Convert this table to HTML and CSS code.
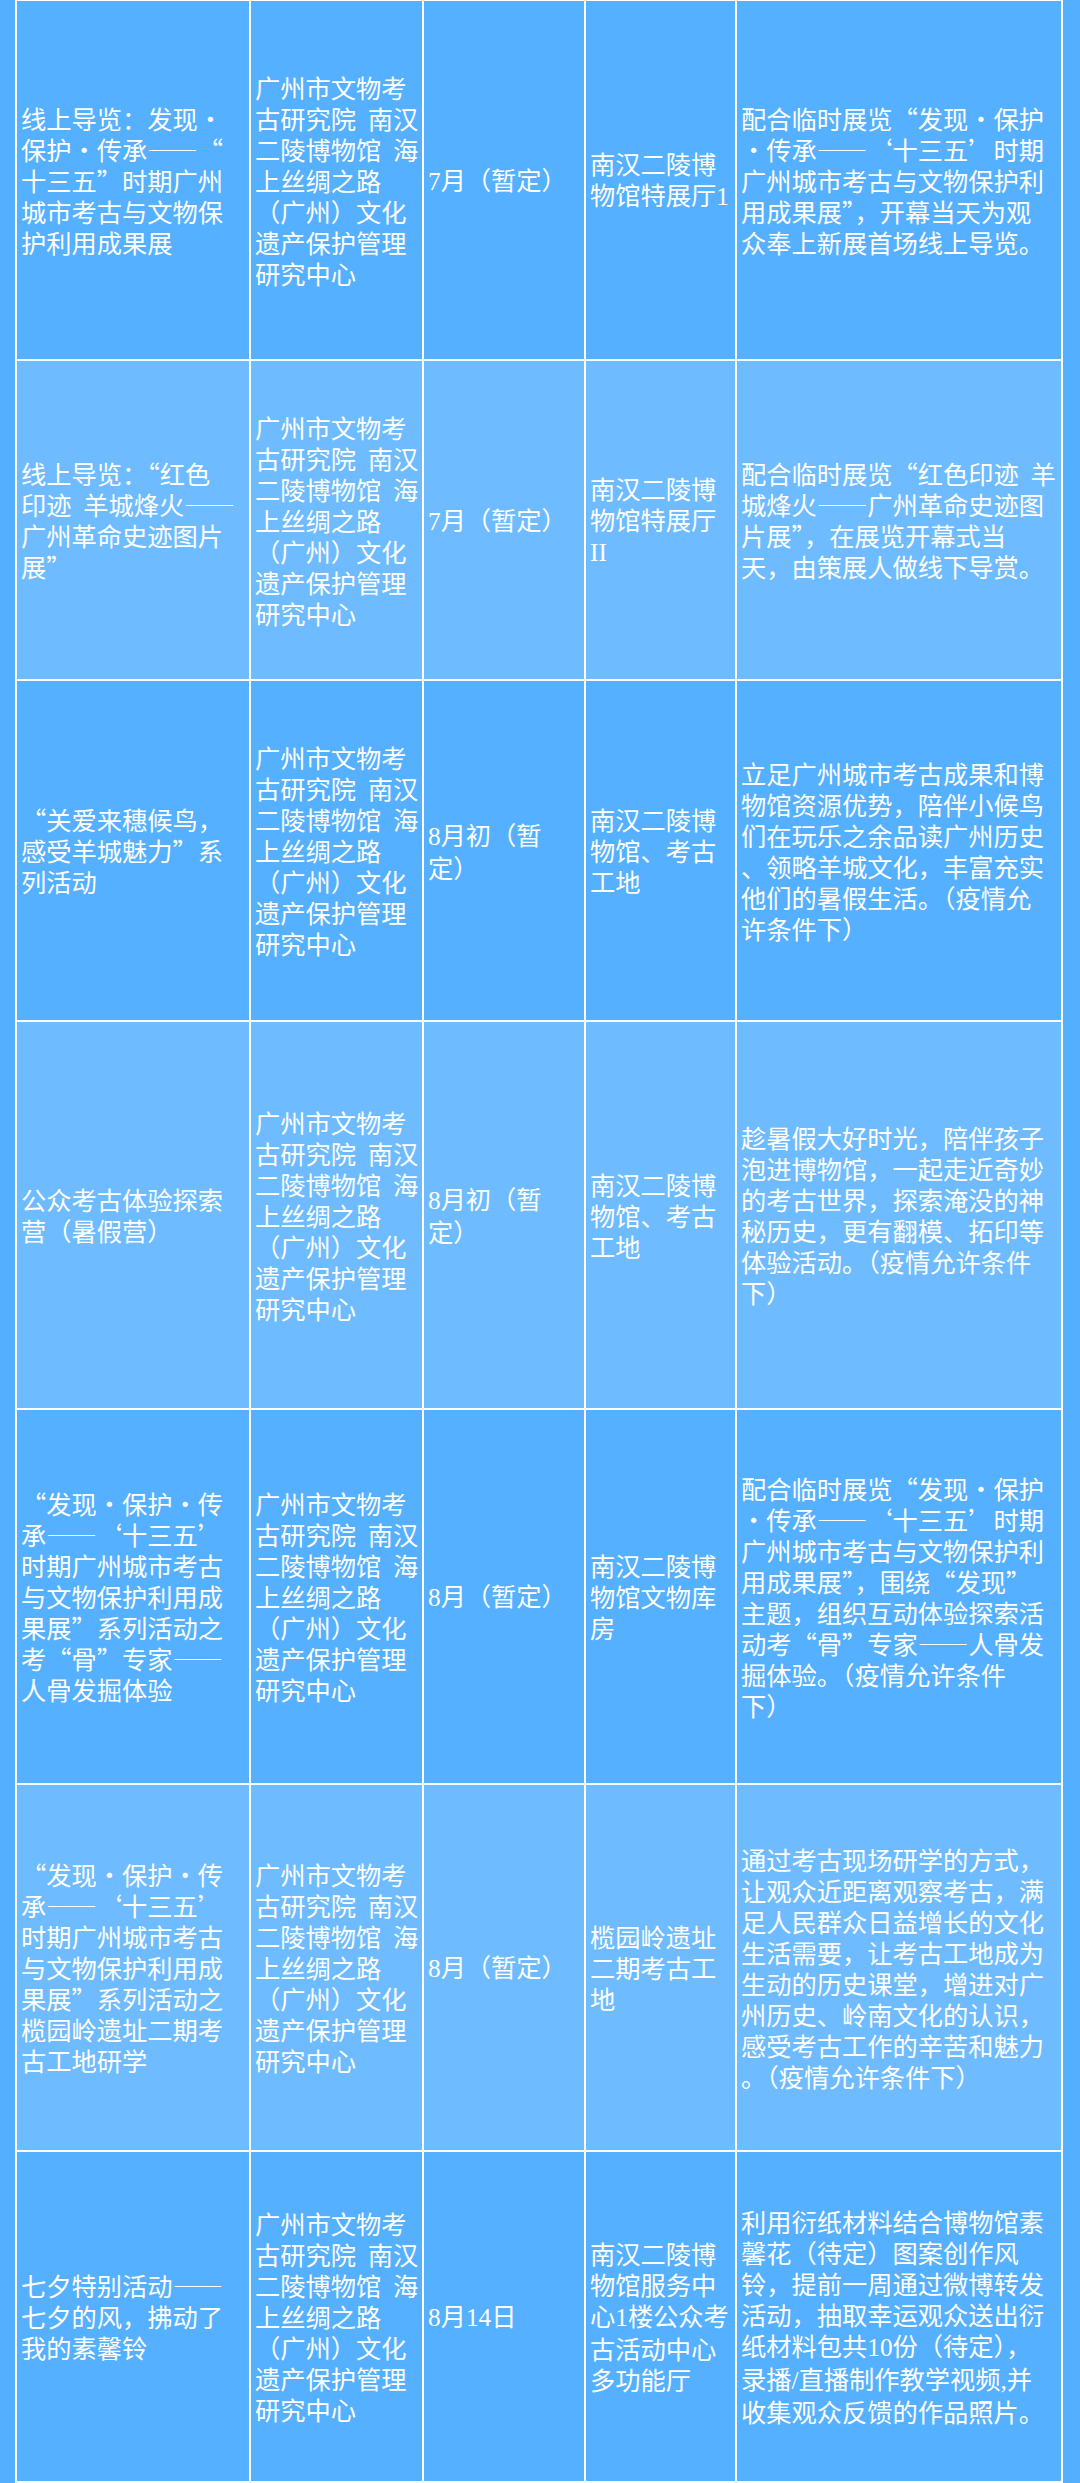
FILE: index.html
```html
<!DOCTYPE html>
<html lang="zh-CN">
<head>
<meta charset="utf-8">
<title>活动安排</title>
<link rel="stylesheet" href="styles.css">
</head>
<body>
<table class="schedule">
  <colgroup>
    <col class="c-name">
    <col class="c-org">
    <col class="c-time">
    <col class="c-place">
    <col class="c-desc">
  </colgroup>
  <tbody>
    <tr class="row row-1 dark">
      <td>线上导览：发现·<br>保护·传承——“<br>十三五”时期广州<br>城市考古与文物保<br>护利用成果展</td>
      <td>广州市文物考<br>古研究院<span class="gap"> </span>南汉<br>二陵博物馆<span class="gap"> </span>海<br>上丝绸之路<br>（广州）文化<br>遗产保护管理<br>研究中心</td>
      <td><span class="num">7</span>月（暂定）</td>
      <td>南汉二陵博<br>物馆特展厅<span class="num">1</span></td>
      <td>配合临时展览“发现·保护<br>·传承——‘十三五’时期<br>广州城市考古与文物保护利<br>用成果展”，开幕当天为观<br>众奉上新展首场线上导览。</td>
    </tr>
    <tr class="row row-2 light">
      <td>线上导览：“红色<br>印迹<span class="gap"> </span>羊城烽火——<br>广州革命史迹图片<br>展”</td>
      <td>广州市文物考<br>古研究院<span class="gap"> </span>南汉<br>二陵博物馆<span class="gap"> </span>海<br>上丝绸之路<br>（广州）文化<br>遗产保护管理<br>研究中心</td>
      <td><span class="num">7</span>月（暂定）</td>
      <td>南汉二陵博<br>物馆特展厅<br><span class="num">II</span></td>
      <td>配合临时展览“红色印迹<span class="gap"> </span>羊<br>城烽火——广州革命史迹图<br>片展”，在展览开幕式当<br>天，由策展人做线下导赏。</td>
    </tr>
    <tr class="row row-3 dark">
      <td>“关爱来穗候鸟，<br>感受羊城魅力”系<br>列活动</td>
      <td>广州市文物考<br>古研究院<span class="gap"> </span>南汉<br>二陵博物馆<span class="gap"> </span>海<br>上丝绸之路<br>（广州）文化<br>遗产保护管理<br>研究中心</td>
      <td><span class="num">8</span>月初（暂<br>定）</td>
      <td>南汉二陵博<br>物馆、考古<br>工地</td>
      <td>立足广州城市考古成果和博<br>物馆资源优势，陪伴小候鸟<br>们在玩乐之余品读广州历史<br>、领略羊城文化，丰富充实<br>他们的暑假生活。（疫情允<br>许条件下）</td>
    </tr>
    <tr class="row row-4 light">
      <td>公众考古体验探索<br>营（暑假营）</td>
      <td>广州市文物考<br>古研究院<span class="gap"> </span>南汉<br>二陵博物馆<span class="gap"> </span>海<br>上丝绸之路<br>（广州）文化<br>遗产保护管理<br>研究中心</td>
      <td><span class="num">8</span>月初（暂<br>定）</td>
      <td>南汉二陵博<br>物馆、考古<br>工地</td>
      <td>趁暑假大好时光，陪伴孩子<br>泡进博物馆，一起走近奇妙<br>的考古世界，探索淹没的神<br>秘历史，更有翻模、拓印等<br>体验活动。（疫情允许条件<br>下）</td>
    </tr>
    <tr class="row row-5 dark">
      <td>“发现·保护·传<br>承——‘十三五’<br>时期广州城市考古<br>与文物保护利用成<br>果展”系列活动之<br>考“骨”专家——<br>人骨发掘体验</td>
      <td>广州市文物考<br>古研究院<span class="gap"> </span>南汉<br>二陵博物馆<span class="gap"> </span>海<br>上丝绸之路<br>（广州）文化<br>遗产保护管理<br>研究中心</td>
      <td><span class="num">8</span>月（暂定）</td>
      <td>南汉二陵博<br>物馆文物库<br>房</td>
      <td>配合临时展览“发现·保护<br>·传承——‘十三五’时期<br>广州城市考古与文物保护利<br>用成果展”，围绕“发现”<br>主题，组织互动体验探索活<br>动考“骨”专家——人骨发<br>掘体验。（疫情允许条件<br>下）</td>
    </tr>
    <tr class="row row-6 light">
      <td>“发现·保护·传<br>承——‘十三五’<br>时期广州城市考古<br>与文物保护利用成<br>果展”系列活动之<br>榄园岭遗址二期考<br>古工地研学</td>
      <td>广州市文物考<br>古研究院<span class="gap"> </span>南汉<br>二陵博物馆<span class="gap"> </span>海<br>上丝绸之路<br>（广州）文化<br>遗产保护管理<br>研究中心</td>
      <td><span class="num">8</span>月（暂定）</td>
      <td>榄园岭遗址<br>二期考古工<br>地</td>
      <td>通过考古现场研学的方式，<br>让观众近距离观察考古，满<br>足人民群众日益增长的文化<br>生活需要，让考古工地成为<br>生动的历史课堂，增进对广<br>州历史、岭南文化的认识，<br>感受考古工作的辛苦和魅力<br>。（疫情允许条件下）</td>
    </tr>
    <tr class="row row-7 dark">
      <td>七夕特别活动——<br>七夕的风，拂动了<br>我的素馨铃</td>
      <td>广州市文物考<br>古研究院<span class="gap"> </span>南汉<br>二陵博物馆<span class="gap"> </span>海<br>上丝绸之路<br>（广州）文化<br>遗产保护管理<br>研究中心</td>
      <td><span class="num">8</span>月<span class="num">14</span>日</td>
      <td>南汉二陵博<br>物馆服务中<br>心<span class="num">1</span>楼公众考<br>古活动中心<br>多功能厅</td>
      <td>利用衍纸材料结合博物馆素<br>馨花（待定）图案创作风<br>铃，提前一周通过微博转发<br>活动，抽取幸运观众送出衍<br>纸材料包共<span class="num">10</span>份（待定），<br>录播<span class="num">/</span>直播制作教学视频<span class="num">,</span>并<br>收集观众反馈的作品照片。</td>
    </tr>
  </tbody>
</table>
</body>
</html>
```

FILE: styles.css
```css
html, body {
  margin: 0;
  padding: 0;
  background: #54affe;
}

body {
  width: 1080px;
  height: 2483px;
  overflow: hidden;
  font-family: "Noto Sans CJK SC", sans-serif;
  color: #ffffff;
}

.schedule {
  margin-left: 15px;
  width: 1048px;
  table-layout: fixed;
  border-collapse: separate;
  border-spacing: 0;
  border-left: 2px solid #ffffff;
  border-top: 1px solid #ffffff;
}

.c-name { width: 234px; }
.c-org { width: 173px; }
.c-time { width: 162px; }
.c-place { width: 151px; }
.c-desc { width: 326px; }

.schedule td {
  border-right: 2px solid #ffffff;
  border-bottom: 2px solid #ffffff;
  padding: 0 0 0 4px;
  vertical-align: middle;
  font-size: 25.25px;
  line-height: 31px;
  white-space: nowrap;
  overflow: hidden;
  font-feature-settings: "fwid" 1;
}

.dark td { background: #55b0ff; }
.light td { background: #6ebcff; }

.row-1 { height: 360px; }
.row-2 { height: 320px; }
.row-3 { height: 341px; }
.row-4 { height: 388px; }
.row-5 { height: 375px; }
.row-6 { height: 367px; }
.row-7 { height: 331px; }

.num {
  font-family: "Liberation Serif", serif;
  font-feature-settings: normal;
}

.gap {
  font-feature-settings: normal;
  letter-spacing: 6px;
}
```
